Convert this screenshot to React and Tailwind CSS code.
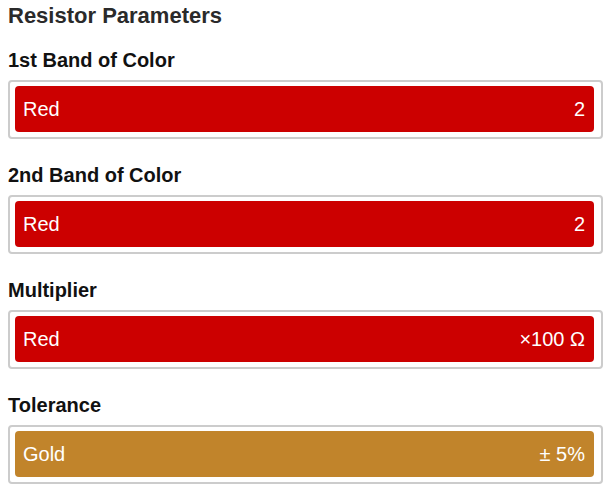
import React from 'react';

const bands = [
  { label: '1st Band of Color', name: 'Red', value: '2', color: 'bg-[#cc0000]' },
  { label: '2nd Band of Color', name: 'Red', value: '2', color: 'bg-[#cc0000]' },
  { label: 'Multiplier', name: 'Red', value: '×100 Ω', color: 'bg-[#cc0000]' },
  { label: 'Tolerance', name: 'Gold', value: '± 5%', color: 'bg-[#c1842b]' },
];

function BandField({ label, name, value, color }) {
  return (
    <div className="mb-[24px]">
      <h3 className="text-[20px] leading-[24px] font-bold text-[#111] mb-[8px]">{label}</h3>
      <div className="border-2 border-[#cccccc] rounded-[4px] pl-[5px] pr-[7px] pt-[4px] pb-[5px] bg-white">
        <div className={`${color} h-[46px] rounded-[4px] flex items-center justify-between pl-[8px] pr-[9px] text-white text-[20px]`}>
          <span>{name}</span>
          <span>{value}</span>
        </div>
      </div>
    </div>
  );
}

export default function App() {
  return (
    <div className="bg-white min-h-screen px-[8px] pt-[2px] font-['Liberation_Sans',Arial,sans-serif]">
      <h2 className="text-[22px] leading-[28px] font-bold text-[#2a2a2a] mb-[18px]">Resistor Parameters</h2>
      {bands.map((b) => (
        <BandField key={b.label} {...b} />
      ))}
    </div>
  );
}
